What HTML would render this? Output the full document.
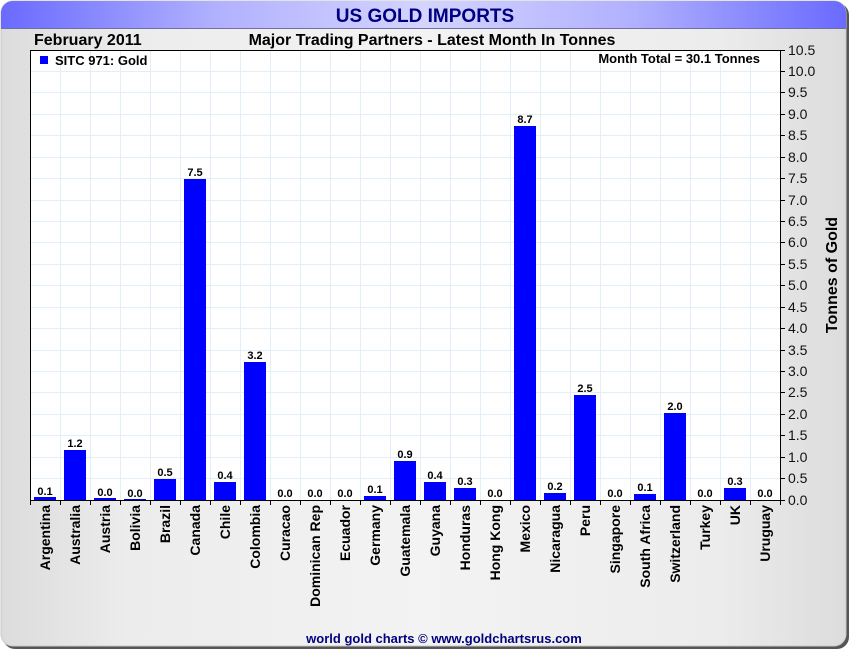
<!DOCTYPE html>
<html><head><meta charset="utf-8"><style>
html,body{margin:0;padding:0;width:850px;height:650px;background:#fff;overflow:hidden}
svg{display:block;font-family:"Liberation Sans",sans-serif}
</style></head><body>
<svg width="850" height="650" viewBox="0 0 850 650">
<defs>
<linearGradient id="bg" x1="0" x2="1" y1="0" y2="0"><stop offset="0" stop-color="#dcdcdc"/><stop offset="0.15" stop-color="#ececec"/><stop offset="0.5" stop-color="#f3f3f3"/><stop offset="0.85" stop-color="#ececec"/><stop offset="1" stop-color="#dcdcdc"/></linearGradient>
<linearGradient id="tb" x1="0" x2="1" y1="0" y2="0"><stop offset="0" stop-color="#6a6aff"/><stop offset="0.25" stop-color="#b0b0ff"/><stop offset="0.5" stop-color="#d4d4ff"/><stop offset="0.75" stop-color="#b0b0ff"/><stop offset="1" stop-color="#6a6aff"/></linearGradient>
</defs>
<rect x="3" y="3" width="846" height="646" rx="12" fill="#555"/>
<rect x="1" y="1" width="845" height="645" rx="12" fill="url(#bg)" stroke="#c8c8c8"/>
<path d="M1 28 V13 A12 12 0 0 1 13 1 H834 A12 12 0 0 1 846 13 V28 Z" fill="url(#tb)"/>
<line x1="1" y1="28.5" x2="846" y2="28.5" stroke="#7070a0"/>
<text x="425" y="22" text-anchor="middle" font-size="19" font-weight="bold" fill="#000080">US GOLD IMPORTS</text>
<text x="34" y="45" font-size="16" font-weight="bold">February 2011</text>
<text x="432" y="45" text-anchor="middle" font-size="16" font-weight="bold">Major Trading Partners - Latest Month In Tonnes</text>
<rect x="30" y="50" width="750" height="450" fill="#fff"/>
<g stroke="#e2eef8" stroke-width="1">
<path d="M60.5 50V500M90.5 50V500M120.5 50V500M150.5 50V500M180.5 50V500M210.5 50V500M240.5 50V500M270.5 50V500M300.5 50V500M330.5 50V500M360.5 50V500M390.5 50V500M420.5 50V500M450.5 50V500M480.5 50V500M510.5 50V500M540.5 50V500M570.5 50V500M600.5 50V500M630.5 50V500M660.5 50V500M690.5 50V500M720.5 50V500M750.5 50V500"/>
<path d="M30 478.5H780M30 457.5H780M30 435.5H780M30 414.5H780M30 392.5H780M30 371.5H780M30 350.5H780M30 328.5H780M30 307.5H780M30 285.5H780M30 264.5H780M30 242.5H780M30 221.5H780M30 200.5H780M30 178.5H780M30 157.5H780M30 135.5H780M30 114.5H780M30 92.5H780M30 71.5H780"/>
</g>
<path d="M30.5 500V50.5H780" fill="none" stroke="#000"/>
<path d="M30 500.5H780.5V50" fill="none" stroke="#000"/>
<g stroke="#000"><path d="M30.5 500V505M60.5 500V505M90.5 500V505M120.5 500V505M150.5 500V505M180.5 500V505M210.5 500V505M240.5 500V505M270.5 500V505M300.5 500V505M330.5 500V505M360.5 500V505M390.5 500V505M420.5 500V505M450.5 500V505M480.5 500V505M510.5 500V505M540.5 500V505M570.5 500V505M600.5 500V505M630.5 500V505M660.5 500V505M690.5 500V505M720.5 500V505M750.5 500V505M780.5 500V505"/>
<path d="M780 500.5h5M780 478.5h5M780 457.5h5M780 435.5h5M780 414.5h5M780 392.5h5M780 371.5h5M780 350.5h5M780 328.5h5M780 307.5h5M780 285.5h5M780 264.5h5M780 242.5h5M780 221.5h5M780 200.5h5M780 178.5h5M780 157.5h5M780 135.5h5M780 114.5h5M780 92.5h5M780 71.5h5M780 50.5h5"/></g>
<g font-size="14" fill="#111">
<text x="788" y="505">0.0</text><text x="788" y="483">0.5</text><text x="788" y="462">1.0</text><text x="788" y="440">1.5</text><text x="788" y="419">2.0</text><text x="788" y="397">2.5</text><text x="788" y="376">3.0</text><text x="788" y="355">3.5</text><text x="788" y="333">4.0</text><text x="788" y="312">4.5</text><text x="788" y="290">5.0</text><text x="788" y="269">5.5</text><text x="788" y="247">6.0</text><text x="788" y="226">6.5</text><text x="788" y="205">7.0</text><text x="788" y="183">7.5</text><text x="788" y="162">8.0</text><text x="788" y="140">8.5</text><text x="788" y="119">9.0</text><text x="788" y="97">9.5</text><text x="788" y="76">10.0</text><text x="788" y="55">10.5</text>
</g>
<text transform="translate(837,275) rotate(-90)" text-anchor="middle" font-size="16" font-weight="bold">Tonnes of Gold</text>
<rect x="40" y="56" width="8" height="8" fill="#0000ff"/>
<text x="55" y="65" font-size="13" font-weight="bold">SITC 971: Gold</text>
<text x="760" y="63" text-anchor="end" font-size="13" font-weight="bold">Month Total = 30.1 Tonnes</text>
<g fill="#0000ff">
<rect x="34" y="497" width="22" height="3"/>
<rect x="64" y="450" width="22" height="50"/>
<rect x="94" y="498" width="22" height="2"/>
<rect x="124" y="499" width="22" height="1"/>
<rect x="154" y="479" width="22" height="21"/>
<rect x="184" y="179" width="22" height="321"/>
<rect x="214" y="482" width="22" height="18"/>
<rect x="244" y="362" width="22" height="138"/>
<rect x="364" y="496" width="22" height="4"/>
<rect x="394" y="461" width="22" height="39"/>
<rect x="424" y="482" width="22" height="18"/>
<rect x="454" y="488" width="22" height="12"/>
<rect x="514" y="126" width="22" height="374"/>
<rect x="544" y="493" width="22" height="7"/>
<rect x="574" y="395" width="22" height="105"/>
<rect x="634" y="494" width="22" height="6"/>
<rect x="664" y="413" width="22" height="87"/>
<rect x="724" y="488" width="22" height="12"/>
</g>
<g font-size="11" font-weight="bold" text-anchor="middle">
<text x="45" y="495">0.1</text><text x="75" y="447">1.2</text><text x="105" y="496">0.0</text><text x="135" y="497">0.0</text><text x="165" y="476">0.5</text><text x="195" y="176">7.5</text><text x="225" y="479">0.4</text><text x="255" y="359">3.2</text><text x="285" y="497">0.0</text><text x="315" y="497">0.0</text><text x="345" y="497">0.0</text><text x="375" y="493">0.1</text><text x="405" y="458">0.9</text><text x="435" y="479">0.4</text><text x="465" y="485">0.3</text><text x="495" y="497">0.0</text><text x="525" y="123">8.7</text><text x="555" y="490">0.2</text><text x="585" y="392">2.5</text><text x="615" y="497">0.0</text><text x="645" y="491">0.1</text><text x="675" y="410">2.0</text><text x="705" y="497">0.0</text><text x="735" y="485">0.3</text><text x="765" y="497">0.0</text>
</g>
<g font-size="14" font-weight="bold" text-anchor="end">
<text transform="translate(50,505) rotate(-90)">Argentina</text>
<text transform="translate(80,505) rotate(-90)">Australia</text>
<text transform="translate(110,505) rotate(-90)">Austria</text>
<text transform="translate(140,505) rotate(-90)">Bolivia</text>
<text transform="translate(170,505) rotate(-90)">Brazil</text>
<text transform="translate(200,505) rotate(-90)">Canada</text>
<text transform="translate(230,505) rotate(-90)">Chile</text>
<text transform="translate(260,505) rotate(-90)">Colombia</text>
<text transform="translate(290,505) rotate(-90)">Curacao</text>
<text transform="translate(320,505) rotate(-90)">Dominican Rep</text>
<text transform="translate(350,505) rotate(-90)">Ecuador</text>
<text transform="translate(380,505) rotate(-90)">Germany</text>
<text transform="translate(410,505) rotate(-90)">Guatemala</text>
<text transform="translate(440,505) rotate(-90)">Guyana</text>
<text transform="translate(470,505) rotate(-90)">Honduras</text>
<text transform="translate(500,505) rotate(-90)">Hong Kong</text>
<text transform="translate(530,505) rotate(-90)">Mexico</text>
<text transform="translate(560,505) rotate(-90)">Nicaragua</text>
<text transform="translate(590,505) rotate(-90)">Peru</text>
<text transform="translate(620,505) rotate(-90)">Singapore</text>
<text transform="translate(650,505) rotate(-90)">South Africa</text>
<text transform="translate(680,505) rotate(-90)">Switzerland</text>
<text transform="translate(710,505) rotate(-90)">Turkey</text>
<text transform="translate(740,505) rotate(-90)">UK</text>
<text transform="translate(770,505) rotate(-90)">Uruguay</text>
</g>
<text x="444" y="643" text-anchor="middle" font-size="13" font-weight="bold" fill="#000080">world gold charts © www.goldchartsrus.com</text>
</svg>
</body></html>
